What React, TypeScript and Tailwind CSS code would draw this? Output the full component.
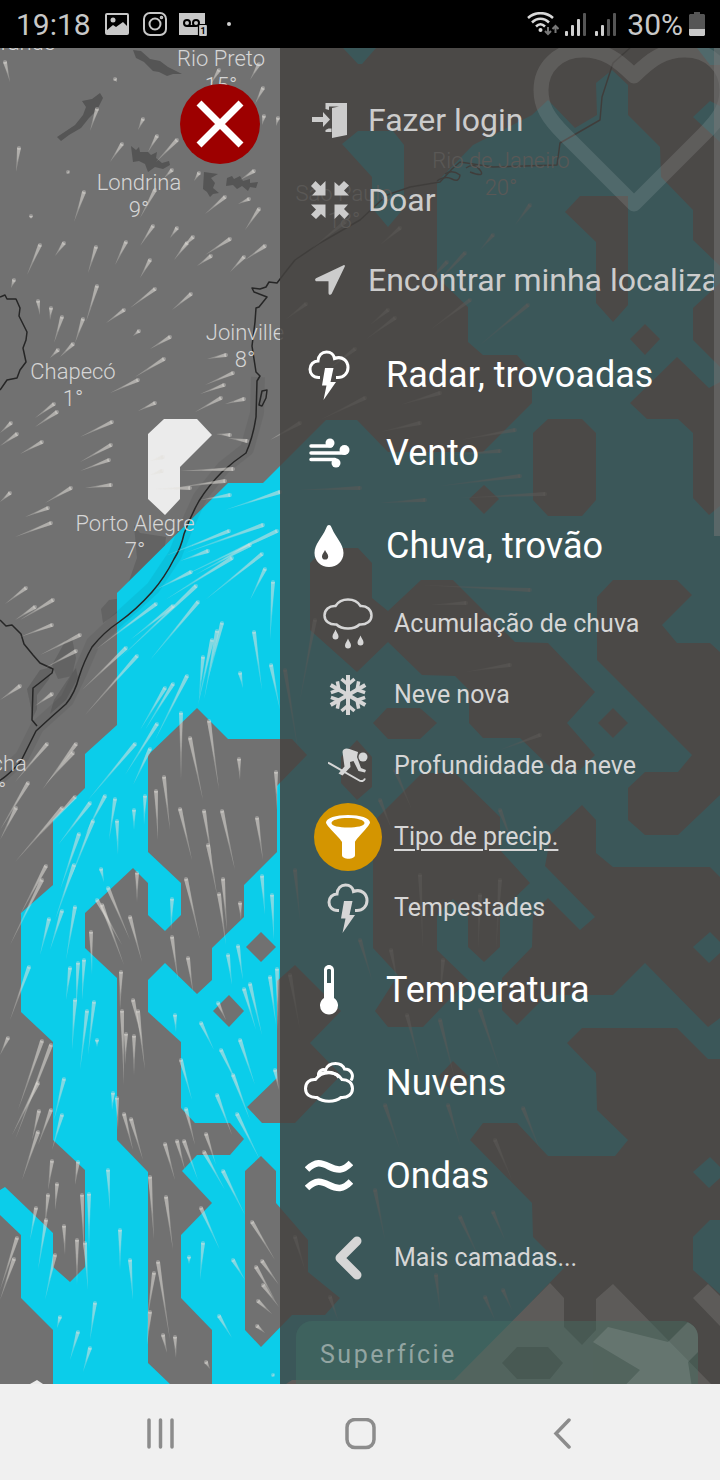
import React from "react";

type IconProps = { className?: string };

interface Layer {
  label: string;
  icon: React.ComponentType<IconProps>;
}

// Weather map ---------------------------------------------------------------

const RAIN_AREAS = [
  "326,420 357,420 388,452 483,452 532,403 532,372 517,355 483,355 468,342 468,307 437,277 437,182 473,145 532,115 548,100 575,128 597,115 596,83 612,70 628,85 628,115 660,147 661,177 693,210 693,240 720,266 720,1384 53,1384 53,1330 21,1298 21,1235 0,1215 0,1190 5,1187 53,1233 53,1267 70,1282 85,1267 85,1170 53,1140 53,1042 21,1012 21,913 53,885 53,820 85,788 85,754 117,725 117,593 228,483 263,483",
  "343,48 358,64 362,64 376,48",
  "342,144 358,131 393,131 404,145 404,208 388,227 372,208 372,177",
  "693,117 710,101 720,106 720,142",
  "697,48 710,65 720,65 720,48",
];

const DRY_AREAS = [
  "170,1384 148,1363 148,1172 117,1140 117,978 85,948 85,913 133,868 148,883 148,915 165,931 181,915 181,883 148,852 148,755 197,708 228,739 292,739 307,755 277,786 277,852 244,885 244,917 212,948 212,980 197,994 165,963 148,980 148,1012 181,1042 181,1108 195,1123 230,1123 244,1139 230,1155 197,1155 182,1171 212,1203 181,1235 181,1298 212,1330 212,1384",
  "261,932 276,947 261,962 246,947",
  "229,995 244,1011 229,1027 213,1011",
  "295,965 341,1011 310,1043 341,1075 295,1123 262,1123 247,1107 277,1078 277,981",
  "261,1156 276,1171 276,1203 308,1240 308,1272 340,1298 325,1315 292,1315 261,1347 245,1330 245,1171",
  "565,212 580,196 628,196 628,305 613,322 596,303 596,242",
  "645,324 660,339 645,355 630,339",
  "720,283 693,308 693,340 720,367",
  "677,357 709,388 720,382 720,506 709,515 693,498 693,433 678,419 647,419 630,403",
  "533,433 548,419 582,419 596,433 596,500 582,516 548,516 533,500",
  "484,485 499,499 484,514 469,499",
  "310,563 325,548 358,548 372,563 372,598 388,611 421,580 453,580 515,642 548,643 595,692 567,723 595,755 580,770 553,770 520,738 483,738 469,723 469,690 455,676 422,675 388,642 357,672 310,630",
  "373,723 387,708 420,708 437,723 420,739 388,739",
  "357,740 372,757 372,787 357,800 341,783 341,757",
  "597,597 613,580 677,580 692,595 662,625 677,643 710,643 720,652 720,795 678,835 645,835 628,820 628,788 645,772 678,772 692,755 597,660",
  "613,708 628,723 613,738 598,723",
  "422,773 455,773 500,817 500,850 530,883 500,912 500,947 484,962 468,947 468,915 453,899 437,915 437,950 468,980 423,1027 388,1027 375,1011 398,975 373,948 373,822",
  "582,805 596,820 596,853 613,867 710,867 720,877 720,1018 708,1027 645,963 613,995 547,995 517,1025 502,1010 502,978 532,947 533,913 548,898 580,930 595,917 545,866 551,834",
  "453,1061 469,1077 453,1092 438,1077",
  "567,1043 582,1028 677,1028 708,1059 720,1059 720,1384 533,1384 533,1300 564,1268 533,1237 532,1203 470,1140 483,1123 517,1123 548,1156 615,1156 628,1140 597,1110 596,1073",
];

const RAIN_SPOTS = [
  "693,947 710,932 720,942 720,953 709,963",
  "693,1172 710,1157 720,1167 720,1178 709,1188",
  "693,1237 710,1220 720,1220 720,1294 693,1270",
];

const SNOW_AREAS = [
  "148,434 164,419 197,419 212,435 180,467 180,499 165,515 148,499",
  "450,1384 550,1283 564,1298 564,1327 582,1345 596,1330 596,1299 613,1284 711,1384",
  "708,1284 693,1298 720,1326 720,1296",
  "286,1384 292,1380 460,1380 460,1384",
  "30,1384 37,1380 43,1384",
];

// head x, head y, tail x, tail y
const STREAKS = [
  [5, 62, 10, 82], [40, 245, 27, 275], [64, 243, 55, 256], [96, 247, 88, 273], [126, 242, 115, 265],
  [97, 109, 90, 131], [143, 119, 138, 130], [157, 136, 148, 152], [177, 140, 156, 162], [122, 144, 110, 162],
  [19, 148, 16, 172], [84, 192, 74, 222], [172, 170, 164, 178], [199, 173, 194, 181], [155, 190, 140, 218],
  [153, 226, 140, 246], [177, 228, 170, 238], [249, 199, 238, 204], [254, 171, 240, 180], [259, 209, 245, 230],
  [225, 197, 205, 214], [193, 237, 180, 250], [230, 239, 205, 255], [263, 88, 255, 104], [219, 70, 210, 85],
  [259, 64, 250, 80], [264, 116, 262, 125], [278, 118, 276, 126], [115, 79, 117, 82], [31, 216, 31, 219],
  [68, 172, 69, 173], [150, 260, 140, 278], [97, 286, 86, 322], [155, 289, 130, 308], [191, 294, 172, 310],
  [124, 310, 106, 323], [211, 256, 197, 266], [187, 243, 174, 260], [244, 257, 230, 272], [265, 246, 245, 260],
  [38, 301, 40, 315], [51, 308, 50, 320], [62, 317, 54, 343], [83, 319, 75, 343], [73, 344, 60, 357],
  [14, 280, 11, 288], [139, 331, 133, 336], [170, 337, 150, 349], [164, 359, 135, 377], [138, 380, 110, 393],
  [58, 350, 50, 358], [226, 355, 207, 359], [233, 373, 205, 385], [224, 385, 200, 394], [221, 398, 195, 412],
  [155, 403, 138, 411], [54, 404, 35, 418], [57, 412, 35, 427], [112, 422, 80, 437], [17, 434, 0, 446],
  [42, 442, 20, 454], [111, 445, 80, 462], [109, 460, 80, 471], [11, 423, 0, 433], [244, 399, 225, 404],
  [247, 441, 228, 438], [230, 435, 216, 434], [233, 469, 180, 471], [225, 481, 180, 487], [111, 485, 85, 488],
  [71, 488, 45, 503], [48, 508, 25, 517], [51, 523, 15, 537], [10, 493, 0, 502], [26, 588, 5, 604],
  [53, 600, 20, 620], [35, 607, 15, 620], [190, 488, 155, 489], [163, 457, 150, 461], [162, 471, 150, 475],
  [229, 531, 165, 556], [263, 525, 185, 553], [277, 531, 175, 580], [191, 572, 155, 590], [232, 558, 165, 600],
  [208, 551, 180, 561], [262, 554, 205, 600], [250, 545, 195, 575], [196, 586, 120, 658], [265, 569, 250, 600],
  [273, 582, 270, 640], [230, 495, 200, 500], [280, 492, 225, 510], [156, 604, 95, 650], [198, 602, 150, 660],
  [126, 648, 82, 690], [137, 656, 85, 715], [173, 606, 130, 640], [222, 623, 208, 680], [217, 631, 204, 700],
  [212, 640, 198, 705], [254, 632, 262, 690], [240, 673, 243, 688], [271, 665, 280, 710], [203, 657, 199, 700],
  [187, 676, 155, 740], [165, 688, 140, 730], [173, 684, 145, 730], [157, 724, 125, 775], [135, 744, 88, 800],
  [150, 749, 133, 785], [52, 625, 20, 637], [80, 635, 40, 655], [76, 651, 45, 668], [20, 686, 0, 700],
  [52, 694, 35, 706], [47, 744, 15, 782], [76, 744, 42, 790], [73, 753, 45, 785], [28, 783, 0, 830],
  [16, 808, 0, 840], [62, 808, 15, 862], [75, 797, 40, 835], [90, 803, 58, 845], [105, 796, 85, 835],
  [93, 821, 70, 880], [79, 834, 60, 890], [74, 865, 55, 920], [115, 799, 109, 840], [117, 821, 118, 855],
  [134, 810, 134, 830], [145, 796, 144, 825], [101, 869, 104, 882], [137, 873, 137, 902], [62, 911, 50, 950],
  [75, 907, 66, 960], [49, 919, 40, 955], [46, 866, 20, 915], [42, 880, 10, 945], [91, 932, 92, 975],
  [97, 900, 122, 945], [102, 905, 124, 965], [108, 888, 130, 940], [130, 917, 142, 962], [181, 713, 181, 780],
  [190, 738, 203, 800], [209, 721, 219, 790], [239, 759, 240, 780], [276, 772, 277, 810], [164, 777, 170, 830],
  [156, 791, 158, 840], [180, 809, 192, 860], [204, 811, 212, 860], [222, 811, 235, 870], [208, 845, 217, 895],
  [257, 818, 263, 860], [186, 879, 200, 940], [219, 894, 226, 945], [223, 879, 227, 930], [240, 903, 241, 920],
  [262, 876, 265, 915], [272, 895, 274, 940], [172, 899, 171, 930], [172, 937, 178, 980], [188, 958, 193, 992],
  [29, 967, 10, 1020], [70, 968, 66, 1000], [84, 960, 82, 1000], [78, 963, 76, 1010], [121, 972, 120, 1010],
  [228, 955, 232, 985], [238, 946, 243, 980], [277, 969, 278, 1030], [270, 977, 276, 1025], [244, 989, 256, 1030],
  [250, 984, 262, 1035], [75, 1000, 72, 1050], [94, 1002, 88, 1055], [87, 1011, 80, 1070], [97, 1040, 97, 1047],
  [133, 1000, 142, 1040], [138, 1011, 145, 1070], [122, 1011, 124, 1085], [126, 1034, 125, 1065], [134, 1036, 134, 1075],
  [175, 1015, 176, 1032], [218, 1003, 226, 1020], [201, 1023, 214, 1050], [221, 1050, 240, 1090], [240, 1040, 255, 1085],
  [42, 1041, 18, 1110], [51, 1045, 15, 1140], [38, 1083, 12, 1135], [8, 1038, 0, 1055], [64, 1079, 54, 1120],
  [113, 1093, 112, 1110], [117, 1098, 118, 1130], [181, 1060, 192, 1100], [233, 1075, 250, 1120], [275, 1070, 279, 1090],
  [39, 1111, 32, 1140], [51, 1110, 38, 1145], [62, 1115, 52, 1150], [124, 1114, 133, 1150], [131, 1119, 143, 1160],
  [186, 1109, 195, 1145], [217, 1095, 232, 1135], [237, 1114, 260, 1160], [38, 1132, 22, 1180], [78, 1162, 75, 1185],
  [52, 1161, 48, 1190], [57, 1184, 55, 1210], [165, 1144, 175, 1180], [177, 1141, 185, 1170], [184, 1141, 198, 1180],
  [206, 1134, 216, 1165], [204, 1152, 225, 1190], [223, 1171, 245, 1215], [108, 1170, 110, 1210], [150, 1177, 154, 1240],
  [36, 1208, 30, 1240], [82, 1195, 84, 1250], [89, 1194, 89, 1250], [48, 1195, 45, 1225], [46, 1220, 38, 1270],
  [166, 1197, 173, 1250], [201, 1208, 220, 1250], [64, 1226, 65, 1255], [120, 1230, 120, 1270], [17, 1238, 0, 1290],
  [14, 1259, 0, 1300], [55, 1255, 45, 1300], [77, 1240, 77, 1285], [85, 1243, 88, 1290], [130, 1260, 133, 1300],
  [158, 1262, 170, 1340], [154, 1273, 147, 1320], [203, 1243, 200, 1280], [189, 1257, 189, 1264], [233, 1260, 245, 1280],
  [252, 1222, 275, 1260], [256, 1267, 275, 1300], [262, 1261, 279, 1285], [263, 1285, 279, 1307], [258, 1301, 272, 1314],
  [95, 1303, 90, 1340], [60, 1317, 57, 1328], [78, 1332, 70, 1360], [90, 1348, 83, 1372], [150, 1312, 147, 1345],
  [163, 1335, 167, 1353], [175, 1337, 176, 1358], [219, 1316, 232, 1338], [206, 1362, 210, 1369], [257, 1326, 265, 1333],
  [273, 1375, 274, 1376], [306, 304, 285, 320], [395, 318, 365, 340], [355, 349, 325, 372], [388, 310, 370, 325],
  [465, 253, 430, 290], [447, 262, 420, 290], [470, 300, 430, 330], [528, 305, 480, 345], [515, 430, 460, 440],
  [440, 393, 400, 405], [420, 423, 380, 432], [365, 398, 320, 420], [300, 423, 270, 440], [500, 451, 450, 455],
  [520, 476, 440, 486], [545, 494, 460, 498], [360, 488, 300, 490], [425, 500, 380, 503], [400, 228, 380, 245],
  [345, 222, 310, 250], [530, 205, 515, 225], [493, 235, 480, 250], [466, 603, 430, 605], [510, 665, 465, 672],
  [530, 590, 420, 585], [540, 735, 500, 750], [395, 770, 412, 810], [380, 800, 392, 830], [500, 810, 515, 850],
  [420, 875, 423, 950], [500, 880, 496, 950], [480, 895, 478, 950], [315, 620, 300, 700], [285, 670, 298, 750],
  [295, 870, 300, 920], [360, 940, 372, 980], [391, 950, 398, 985], [443, 960, 440, 1000], [290, 975, 300, 1030],
  [407, 1015, 420, 1065], [440, 1020, 455, 1080], [480, 1010, 500, 1070], [385, 1105, 400, 1150], [448, 1105, 460, 1145],
  [523, 1108, 540, 1150], [495, 1140, 512, 1180], [375, 1190, 385, 1240], [460, 1217, 480, 1260], [493, 1212, 505, 1240],
  [295, 1237, 305, 1270], [330, 1297, 338, 1320], [436, 1275, 440, 1310], [485, 1297, 495, 1320], [503, 1290, 512, 1310],
];

// Wedge that is wide at the head and fades into a point at the tail
const wedge = ([hx, hy, tx, ty]: number[], reach: number) => {
  const dx = tx - hx;
  const dy = ty - hy;
  const length = Math.hypot(dx, dy) || 1;
  const nx = (-dy / length) * 2;
  const ny = (dx / length) * 2;
  return `${hx + nx},${hy + ny} ${hx - nx},${hy - ny} ${hx + dx * reach},${hy + dy * reach}`;
};

const CITIES: [string, string, number, number][] = [
  ["rande", "", 28, 50],
  ["Rio Preto", "15°", 221, 66],
  ["Londrina", "9°", 139, 190],
  ["Joinville", "8°", 245, 340],
  ["Chapecó", "1°", 73, 379],
  ["Porto Alegre", "7°", 135, 531],
  ["Rocha", "0°", -4, 771],
  ["Rio de Janeiro", "20°", 501, 168],
  ["São Paulo", "18°", 344, 201],
];

const WeatherMap = () => (
  <svg
    className="absolute inset-0 h-full w-full"
    viewBox="0 48 720 1336"
    preserveAspectRatio="xMinYMin slice"
    aria-hidden="true"
  >
    <rect y="48" width="720" height="1336" fill="#717171" />
    <g fill="#555555">
      <path d="M133 50l8 1 9 8 10 2 8 6 14 7-9 0-6 2-8-4-6-1-9-9-8-4z" />
      <path d="M57 137l18-12 8-10 3-8-4-6 10-2 8-6 3 5-6 12-8 8-8 10-12 7-8 6z" />
      <path d="M131 146l5 4 3-3 1 5 8 0 3 3 6-3-1 6 6 5 7-2 1 4-7 4-8-2-7 5-3-8-6-3-6 1z" />
      <path d="M204 172l14 2-7 4 4 5-2 5 6 5-6 1-3 3-3-5-4-3z" />
      <path d="M227 178l5-2 2 3 6-3 3 5 7-2 0 4 8-1-2 6-6-1-2 4-6-5-5 3-4-4-7 1z" />
      <path
        opacity=".5"
        d="M134 525l6 8 26 4-3 25-14 16-16 20-16 15-14 10-2-14 8-9 14-2 14-40zM66 640l6-2 4 20-4 18-14 3-6-14zM40 670l12-3-3 12-12 16 0 14-4 8-6-28zM76 668l2 10-12 22-16 14 4-14 12-18z"
      />
    </g>
    <g fill="#0bcdea">
      {RAIN_AREAS.map((points) => (
        <polygon key={points} points={points} />
      ))}
    </g>
    <g fill="#717171">
      {DRY_AREAS.map((points) => (
        <polygon key={points} points={points} />
      ))}
    </g>
    <g fill="#0bcdea">
      {RAIN_SPOTS.map((points) => (
        <polygon key={points} points={points} />
      ))}
    </g>
    <g fill="#ebebeb">
      {SNOW_AREAS.map((points) => (
        <polygon key={points} points={points} />
      ))}
    </g>
    <polygon points="502,1363 517,1347 548,1347 563,1363 550,1379 517,1379" fill="#717171" />

    <g fill="none" strokeLinejoin="round">
      <g stroke="#000" opacity=".05">
        <path
          d="M258 377l-1 36-10 36-24 19-23 29-15 33-10 25-22 33-33 30-27 25-13 30-13 27-30 27-15 30-22 20"
          strokeWidth="14"
        />
        <path
          d="M258 377l-1 36-10 36-24 19-23 29-15 33-10 25-22 33-33 30-27 25-13 30-13 27-30 27-15 30-22 20"
          strokeWidth="7"
        />
      </g>
      <g stroke="#262626" strokeWidth="1.5">
        <path d="M630 48l-17 15-11 34-2 23-40 23-3 22-64 2-33-5-8 7-12 13-30 5-23 8-27 25-40 23-25 17-8 10-10 13-8-1-3 5-6 2-8-1 2 4 13 5-8 10-3 1-1 14-3 24 4 26 4 4-3 5-1 36q-3 20-10 36-12 8-24 19-13 13-23 29-9 16-15 33-3 14-10 25-9 18-22 33-16 18-33 30-15 10-27 25-8 14-13 30-4 16-13 27-16 14-30 27-8 16-15 30-12 14-22 20" />
        <path d="M262 391l5-1-1 8-4 8-3-1zM0 297l5-2 2 4 9 0 4 9-1 8 8 16-1 8-3 8 3 14-6 8-3 8-10 2-7 10M0 620l6 6 6-1 9 9 3 10 9 11 7 8 13 6-1 4-10 8-9 7-1 32 5 6" />
        <path d="M437 181q8-6 15-2t8-4q-8-6-15-1M466 168q8-6 14 2t-10 2" />
      </g>
    </g>

    <g fill="#e6e1dc">
      {STREAKS.map((streak, i) => (
        <g key={i}>
          <polygon points={wedge(streak, 1)} opacity=".3" />
          <polygon points={wedge(streak, 0.6)} opacity=".35" />
          <circle cx={streak[0]} cy={streak[1]} r="2" opacity=".35" />
        </g>
      ))}
    </g>

    <g className="font-['Roboto',sans-serif] text-[22px] font-light" fill="#d6d6d6" textAnchor="middle">
      {CITIES.map(([name, temperature, x, y]) => (
        <g key={name}>
          <text x={x} y={y}>{name}</text>
          <text x={x} y={y + 27}>{temperature}</text>
        </g>
      ))}
    </g>
  </svg>
);

// Menu icons ----------------------------------------------------------------

const LoginIcon = ({ className }: IconProps) => (
  <svg className={className} viewBox="0 0 36 36" fill="currentColor">
    <path d="M0 15h11V10l7 7.500-7 7.500v-5H0z" />
    <path d="M13.500 1H35v32l-15 3V6l7-1.500H17V8l-3.500-1zM13.500 28l3-1.500h3V30h-6z" />
  </svg>
);

const ShrinkIcon = ({ className }: IconProps) => (
  <svg className={className} viewBox="0 0 38 38" fill="currentColor">
    {["", "rotate(90 19 19)", "rotate(180 19 19)", "rotate(270 19 19)"].map((turn) => (
      <path key={turn} transform={turn} d="M14.500 14.500H1L5 10 0 5 4.500 0l5 5 5-5z" />
    ))}
  </svg>
);

const LocationIcon = ({ className }: IconProps) => (
  <svg className={className} viewBox="0 0 30 30" fill="currentColor">
    <path d="M28.500.2 1 13.300c-1.500.8-1 3 .7 3H13.500V28c0 2 2.300 2.600 3.200.8L29.800 1.500C30.200.4 29.500-.2 28.500.2z" />
  </svg>
);

const StormIcon = ({ className }: IconProps) => (
  <svg className={className} viewBox="0 0 42 50">
    <path
      d="M12 27.500H10.500C5 27.500 2 23.500 2 19.200 2 14.500 5.500 11 10 11 10.500 5 14 2 18.500 2c4.500 0 7.500 3 8 6.500C34.500 5.500 40 11 40 17.500c0 6-4.500 10-10 10h-2"
      fill="none"
      stroke="currentColor"
      strokeWidth="3"
    />
    <path d="M17 18h8.500l-3 14H28L15.500 50l3-14.500H14z" fill="currentColor" />
  </svg>
);

const WindIcon = ({ className }: IconProps) => (
  <svg className={className} viewBox="0 0 42 30">
    <g stroke="currentColor" strokeWidth="3.500" strokeLinecap="round">
      <path d="M3 8h20M3 15h34M3 21.500h24" />
    </g>
    <g fill="currentColor">
      <circle cx="22" cy="5" r="4.500" />
      <circle cx="36.500" cy="12" r="5" />
      <circle cx="28" cy="25" r="4.500" />
    </g>
  </svg>
);

const DropIcon = ({ className }: IconProps) => (
  <svg className={className} viewBox="0 0 30 42" fill="currentColor" fillRule="evenodd">
    <path d="M15 0c1.500 0 2 1 3 3.500C22 13 29.500 19 29.500 28 29.500 36 23 42 15 42S.5 36 .5 28C.5 19 8 13 12 3.500 13 1 13.500 0 15 0zM11 25c-1 2.500-3 4-3 6.200a3 3.300 0 0 0 6.200 0C14.200 29 12 27.500 11 25z" />
  </svg>
);

const RainIcon = ({ className }: IconProps) => (
  <svg className={className} viewBox="0 0 50 52">
    <path
      d="M12.500 8C15 4 20 1.500 25 1.500S35 4 37.500 8C44 7.500 48.500 12 48.500 17.500S43.500 27 36.500 26.500C34 29 29.500 30.500 25 30.500S16 29 13.500 26.500C6.500 27 1.500 23 1.500 17.500S6 7.500 12.500 8z"
      fill="none"
      stroke="currentColor"
      strokeWidth="2.500"
    />
    <g fill="currentColor">
      <path d="M12.500 31.500c1 3 3 4.500 3 7a3 3 0 0 1-6 0c0-2.500 2-4 3-7zM25 40.500c1 3 3 4.500 3 7a3 3 0 0 1-6 0c0-2.500 2-4 3-7zM37.500 37.500c1 3 3 4.500 3 7a3 3 0 0 1-6 0c0-2.500 2-4 3-7z" />
    </g>
  </svg>
);

const SnowIcon = ({ className }: IconProps) => (
  <svg className={className} viewBox="0 0 40 40" fill="none" stroke="currentColor" strokeWidth="4">
    {["", "rotate(60 20 20)", "rotate(120 20 20)"].map((turn) => (
      <g key={turn} transform={turn}>
        <path d="M20 0v40" />
        <path d="M13.500 4 20 9.500 26.500 4M13.500 36l6.500-5.500 6.500 5.500" strokeWidth="3.500" />
      </g>
    ))}
  </svg>
);

const SkiIcon = ({ className }: IconProps) => (
  <svg className={className} viewBox="0 0 40 36">
    <circle cx="35" cy="9" r="4.500" fill="currentColor" />
    <path
      d="M14.500 4c0-3 3.500-4.500 7-3L30 4l-1 5 4 11 5 2-1 2.500-6.500-1.500-5-10-3.500 1 .5 5-8 8.500-4-2 6-7z"
      fill="currentColor"
    />
    <path d="M0 14.500 30.500 32c3 2 5.500 1 6.500-1.500" fill="none" stroke="currentColor" strokeWidth="2" />
  </svg>
);

const FunnelIcon = ({ className }: IconProps) => (
  <svg className={className} viewBox="0 0 44 44" fill="currentColor" fillRule="evenodd">
    <path d="M22 0c12 0 22 3 22 7.500 0 3-14 16.500-15 19.500V40c0 5-13 5-13 0V27C15 24 0 10.500 0 7.500 0 3 10 0 22 0zm0 3C13 3 5.500 5 5.500 8S13 12.500 22 12.500 38.500 11 38.500 8 31 3 22 3z" />
  </svg>
);

const ThermometerIcon = ({ className }: IconProps) => (
  <svg className={className} viewBox="0 0 20 50" fill="currentColor" fillRule="evenodd">
    <path d="M10 0c3 0 5 2.500 5 5v28a9 9 0 1 1-10 0V5c0-2.500 2-5 5-5zM8 5v13h4V5c0-1.500-4-1.500-4 0z" />
  </svg>
);

const CloudsIcon = ({ className }: IconProps) => (
  <svg className={className} viewBox="0 0 50 42" fill="none" stroke="currentColor" strokeWidth="3">
    <path d="M14.500 13.500C14 9 19 6.500 21.500 8 23 4 27 1.500 31.500 1.500c4 0 7.500 2 9 5.500C47 7 50.500 13 47 18.500M14 14.500c4-5 15-6.500 21 1" />
    <path d="M11.500 17.500c6-9 21-9 26.500 0C44 17.500 48.500 21 48.500 26.500S44 36 37 35.500c-6 5-18 5-24 0C6 36 1.500 32.500 1.500 26.500s4-9.500 10-9z" />
  </svg>
);

const WavesIcon = ({ className }: IconProps) => (
  <svg className={className} viewBox="0 0 48 32" fill="none" stroke="currentColor" strokeWidth="6.500">
    <path d="M2 9.500C11 1 16 2.500 24 6.500S38 11.500 46 3M2 28c9-8.500 14-7 22-3S38 30 46 21.500" />
  </svg>
);

const ChevronIcon = ({ className }: IconProps) => (
  <svg className={className} viewBox="0 0 28 44" fill="none" stroke="currentColor" strokeWidth="9">
    <path d="M23 5 6 22l17 17" strokeLinecap="round" strokeLinejoin="round" />
  </svg>
);

// Menu rows -----------------------------------------------------------------

const ActionRow = ({ label, icon: Icon, size }: Layer & { size: string }) => (
  <button type="button" className="flex h-20 items-center gap-4 pl-7 text-left text-[32px] whitespace-nowrap text-[#cccccc]">
    <span className="flex w-11 shrink-0 justify-center">
      <Icon className={size} />
    </span>
    {label}
  </button>
);

const LayerRow = ({ label, icon: Icon, size, height }: Layer & { size: string; height: string }) => (
  <button type="button" className={`flex ${height} items-center gap-8 pl-6 text-left text-[36px] text-white`}>
    <span className="flex w-[50px] shrink-0 justify-center">
      <Icon className={size} />
    </span>
    {label}
  </button>
);

const SubLayerRow = ({ label, icon: Icon, size, active }: Layer & { size: string; active?: boolean }) => (
  <button type="button" className="flex h-[71px] items-center gap-3 pl-[34px] text-left text-[25px] text-[#d6d6d6]">
    <span
      className={
        active
          ? "flex size-[68px] shrink-0 items-center justify-center rounded-full bg-[#d49500] text-white"
          : "flex size-[68px] shrink-0 items-center justify-center"
      }
    >
      <Icon className={size} />
    </span>
    <span className={active ? "underline decoration-2 underline-offset-4" : ""}>{label}</span>
  </button>
);

const LayerMenu = () => (
  <nav className="relative flex w-[440px] shrink-0 flex-col overflow-hidden bg-[#444240]/85">
    <svg className="absolute top-0 right-0 h-[170px] w-[188px]" viewBox="532 48 188 170" fill="none">
      <path
        d="M634 204 565 135C547 117 541 106 541 90 541 67 559 50 583 50 604 50 617 59 634 76 651 59 664 50 685 50 709 50 727 67 727 90 727 106 721 117 703 135z"
        stroke="#fff"
        strokeWidth="15"
        strokeLinejoin="round"
        opacity=".11"
      />
    </svg>
    <div className="absolute top-0 right-0 h-[488px] w-1.5 bg-[#777777]/50" />

    <div className="relative mr-1.5 flex shrink-0 flex-col overflow-hidden pt-8">
      <ActionRow label="Fazer login" icon={LoginIcon} size="size-9" />
      <ActionRow label="Doar" icon={ShrinkIcon} size="size-[38px]" />
      <ActionRow label="Encontrar minha localização" icon={LocationIcon} size="size-[30px]" />
    </div>
    <div className="relative flex shrink-0 flex-col pt-4">
      <LayerRow label="Radar, trovoadas" icon={StormIcon} size="h-[50px] w-[42px]" height="h-[78px]" />
      <LayerRow label="Vento" icon={WindIcon} size="h-[30px] w-[42px]" height="h-[78px]" />
      <LayerRow label="Chuva, trovão" icon={DropIcon} size="h-[42px] w-[30px]" height="h-24 pt-3" />
      <SubLayerRow label="Acumulação de chuva" icon={RainIcon} size="h-[52px] w-[50px]" />
      <SubLayerRow label="Neve nova" icon={SnowIcon} size="size-10" />
      <SubLayerRow label="Profundidade da neve" icon={SkiIcon} size="h-9 w-10" />
      <SubLayerRow label="Tipo de precip." icon={FunnelIcon} size="size-11" active />
      <SubLayerRow label="Tempestades" icon={StormIcon} size="h-[50px] w-[42px]" />
      <LayerRow label="Temperatura" icon={ThermometerIcon} size="h-[50px] w-5" height="h-[93px]" />
      <LayerRow label="Nuvens" icon={CloudsIcon} size="h-[42px] w-[50px]" height="h-[93px]" />
      <LayerRow label="Ondas" icon={WavesIcon} size="h-8 w-12" height="h-[93px]" />
      <SubLayerRow label="Mais camadas..." icon={ChevronIcon} size="h-11 w-7" />
    </div>
    <button
      type="button"
      className="relative mt-7 mr-[22px] ml-4 h-20 shrink-0 overflow-hidden rounded-2xl bg-[#447366]/40 px-6 pb-3 text-left text-[25px] tracking-widest text-[#93a5a2]"
    >
      <svg className="absolute top-0 right-0 h-20 w-[110px]" viewBox="0 0 110 80" fill="#fff" opacity=".11">
        <path d="M5 21 20 6 80 21 100 1 110 8V31L100 41 106 80H22L52 49z" />
      </svg>
      Superfície
    </button>
  </nav>
);

// Phone chrome --------------------------------------------------------------

const Signal = ({ bars }: { bars: number }) => (
  <svg className="h-6 w-[22px]" viewBox="0 0 22 24">
    {[5, 11, 17, 23].map((height, i) => (
      <rect key={height} x={i * 6} y={24 - height} width="3" height={height} rx="1" fill={i < bars ? "#d0d0d0" : "#555555"} />
    ))}
  </svg>
);

const StatusBar = () => (
  <header className="flex h-12 shrink-0 items-center bg-black pr-[15px] pl-4 text-[30px] text-[#c8c8c8]">
    <span>19:18</span>
    <svg className="ml-3.5 size-6" viewBox="0 0 24 24">
      <rect x="1" y="2" width="22" height="20" rx="1" fill="none" stroke="currentColor" strokeWidth="2" />
      <circle cx="8" cy="8" r="2.500" fill="currentColor" />
      <path d="m2 18 6-5 3 2 7-5 4 4v8H2z" fill="currentColor" />
    </svg>
    <svg className="ml-3.5 size-6" viewBox="0 0 24 24" fill="none" stroke="currentColor" strokeWidth="2">
      <rect x="1" y="1" width="22" height="22" rx="6" />
      <circle cx="12" cy="12" r="5.500" />
      <circle cx="18.500" cy="5.500" r=".8" />
    </svg>
    <svg className="ml-3 h-6 w-7" viewBox="0 0 28 24">
      <path d="M0 1h26v22H0z" fill="currentColor" />
      <g fill="none" stroke="#000" strokeWidth="2">
        <circle cx="8" cy="11" r="3" />
        <circle cx="17" cy="11" r="3" />
        <path d="M8 14h9" />
      </g>
      <rect x="19.500" y="12.500" width="9" height="12" rx="1.500" fill="currentColor" stroke="#000" strokeWidth="1.200" />
      <text x="21.500" y="22" fontSize="9" fontWeight="700" fill="#000">1</text>
    </svg>
    <span className="ml-5 size-1 rounded-full bg-[#d0d0d0]" />

    <svg className="ml-auto h-6 w-8" viewBox="0 0 32 24">
      <g fill="none" stroke="#d8d8d8" strokeWidth="2.500">
        <path d="M1 6c7-6.500 18-6.500 25 0M5 10.500c5-5 12-5 17 0M9 14.500c3-3 6-3 9 0" />
      </g>
      <circle cx="13.500" cy="18" r="2" fill="#d8d8d8" />
      <path d="M21 15v7m-3-3 3 3 3-3M28.500 21v-7m-3 3 3-3 3 3" fill="none" stroke="#777" strokeWidth="2" />
    </svg>
    <span className="ml-1.5 flex gap-2">
      <Signal bars={3} />
      <Signal bars={2} />
    </span>
    <span className="ml-2.5">30%</span>
    <svg className="ml-1.5 h-6 w-4" viewBox="0 0 16 24">
      <path d="M5 0h6v2h4l1 1v14H0V3l1-1h4z" fill="#555555" />
      <path d="M0 17h16v6l-1 1H1l-1-1z" fill="#c8c8c8" />
    </svg>
  </header>
);

const NavigationBar = () => (
  <footer className="flex h-24 shrink-0 items-center justify-around bg-[#f0f0f0] px-[58px] pt-1 text-[#8c8c8c]">
    <button type="button" aria-label="Recentes" className="flex h-12 w-12 items-center justify-center">
      <svg className="h-8 w-8" viewBox="0 0 32 32" stroke="currentColor" strokeWidth="3.500" strokeLinecap="round">
        <path d="M6 2v27M17.500 2v27M29 2v27" />
      </svg>
    </button>
    <button type="button" aria-label="Início" className="flex h-12 w-12 items-center justify-center">
      <svg className="h-8 w-8" viewBox="0 0 32 32" fill="none" stroke="currentColor" strokeWidth="3.500">
        <rect x="3" y="1.500" width="27" height="28" rx="8" />
      </svg>
    </button>
    <button type="button" aria-label="Voltar" className="flex h-12 w-12 items-center justify-center">
      <svg className="h-8 w-8" viewBox="0 0 32 32" fill="none" stroke="currentColor" strokeWidth="3.500">
        <path d="M24 2 11 15.500l13 13.500" strokeLinecap="round" />
      </svg>
    </button>
  </footer>
);

const App = () => {
  return (
    <div className="flex h-screen flex-col overflow-hidden bg-black font-['Roboto',sans-serif]">
      <StatusBar />
      <main className="relative flex min-h-0 flex-1 overflow-hidden">
        <WeatherMap />
        <div className="relative flex flex-1 items-start justify-end pt-9 pr-5">
          <button
            type="button"
            aria-label="Fechar"
            className="flex size-20 items-center justify-center rounded-full bg-[#9d0000] text-white"
          >
            <svg className="size-12" viewBox="0 0 48 48" stroke="currentColor" strokeWidth="7">
              <path d="m3 3 42 42M45 3 3 45" />
            </svg>
          </button>
        </div>
        <LayerMenu />
      </main>
      <NavigationBar />
    </div>
  );
};

export default App;
